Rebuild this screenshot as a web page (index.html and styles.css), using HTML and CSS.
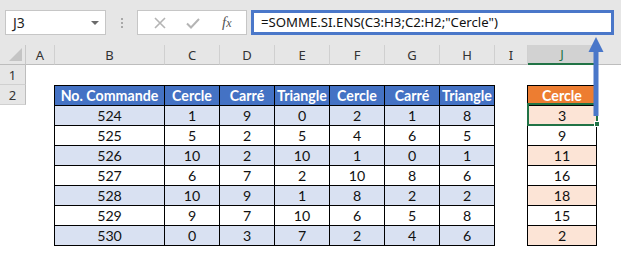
FILE: index.html
```html
<!DOCTYPE html>
<html>
<head>
<meta charset="utf-8">
<link rel="stylesheet" href="styles.css">
</head>
<body>
<div class="app">
  <div class="topbar">
    <div class="namebox"><span class="nb-text">J3</span><span class="nb-caret"></span></div>
    <div class="dots"><span></span><span></span><span></span></div>
    <div class="fbuttons">
      <svg class="ico" width="14" height="14" viewBox="0 0 14 14"><path d="M2 2 L12 12 M12 2 L2 12" stroke="#b4b4b4" stroke-width="1.6" fill="none"/></svg>
      <svg class="ico" width="16" height="14" viewBox="0 0 16 14"><path d="M2 7.5 L6 11.5 L14 3" stroke="#b4b4b4" stroke-width="2" fill="none"/></svg>
      <span class="fx">f<i>x</i></span>
    </div>
    <div class="formula">=SOMME.SI.ENS(C3:H3;C2:H2;"Cercle")</div>
  </div>
  <div class="sheet">
    <div class="corner"><span class="tri"></span></div>
    <div class="ch">A</div><div class="ch">B</div><div class="ch">C</div><div class="ch">D</div><div class="ch">E</div><div class="ch">F</div><div class="ch">G</div><div class="ch">H</div><div class="ch">I</div><div class="ch ch-sel">J</div><div class="ch ch-rest"></div>
    <div class="rh">1</div><div class="row-fill"></div>
    <div class="rh">2</div><div class="row-fill"></div>
    <div class="rh rh-sel">3</div><div class="row-fill"></div>
    <div class="rh">4</div><div class="row-fill"></div>
    <div class="rh">5</div><div class="row-fill"></div>
    <div class="rh">6</div><div class="row-fill"></div>
    <div class="rh">7</div><div class="row-fill"></div>
    <div class="rh">8</div><div class="row-fill"></div>
    <div class="rh">9</div><div class="row-fill"></div>
    <div class="rh">10</div><div class="row-fill"></div>

    <table class="data">
      <colgroup><col class="cb"><col class="cn"><col class="cn"><col class="cn"><col class="cn"><col class="cn"><col class="cn"></colgroup>
      <tr class="hd"><td>No. Commande</td><td>Cercle</td><td>Carré</td><td>Triangle</td><td>Cercle</td><td>Carré</td><td>Triangle</td></tr>
      <tr class="alt"><td>524</td><td>1</td><td>9</td><td>0</td><td>2</td><td>1</td><td>8</td></tr>
      <tr><td>525</td><td>5</td><td>2</td><td>5</td><td>4</td><td>6</td><td>5</td></tr>
      <tr class="alt"><td>526</td><td>10</td><td>2</td><td>10</td><td>1</td><td>0</td><td>1</td></tr>
      <tr><td>527</td><td>6</td><td>7</td><td>2</td><td>10</td><td>8</td><td>6</td></tr>
      <tr class="alt"><td>528</td><td>10</td><td>9</td><td>1</td><td>8</td><td>2</td><td>2</td></tr>
      <tr><td>529</td><td>9</td><td>7</td><td>10</td><td>6</td><td>5</td><td>8</td></tr>
      <tr class="alt"><td>530</td><td>0</td><td>3</td><td>7</td><td>2</td><td>4</td><td>6</td></tr>
    </table>

    <table class="res">
      <tr class="hd"><td>Cercle</td></tr>
      <tr class="alt"><td>3</td></tr>
      <tr><td>9</td></tr>
      <tr class="alt"><td>11</td></tr>
      <tr><td>16</td></tr>
      <tr class="alt"><td>18</td></tr>
      <tr><td>15</td></tr>
      <tr class="alt"><td>2</td></tr>
    </table>
  </div>
  <div class="selbox"></div>
  <div class="handle"></div>
  <svg class="arrow" width="20" height="90" viewBox="0 0 20 90">
    <rect x="7.5" y="14" width="5" height="66" fill="#4a77c9"/>
    <path d="M2.5 16 L10 1 L17.5 16 Z" fill="#4a77c9"/>
  </svg>
</div>
</body>
</html>
```
FILE: styles.css
```css
* { box-sizing: border-box; }
html, body { margin: 0; padding: 0; }
body { width: 621px; height: 257px; overflow: hidden; background: #fff; font-family: "Noto Sans", sans-serif; }
.app { position: relative; width: 621px; height: 257px; overflow: hidden; }

.topbar {
  height: 45px;
  background: #e6e6e6;
  display: flex;
  align-items: flex-start;
  padding-top: 10px;
  padding-left: 5px;
}
.namebox {
  width: 101px; height: 25px;
  background: #fff;
  border: 1px solid #c6c6c6;
  display: flex; align-items: center; justify-content: space-between;
  padding: 0 6px 0 7px;
}
.nb-text { font-size: 14px; color: #222; font-family: "Noto Sans", sans-serif; }
.nb-caret { width: 0; height: 0; border-left: 4px solid transparent; border-right: 4px solid transparent; border-top: 4px solid #6a6a6a; }
.dots { width: 31px; height: 25px; display: flex; flex-direction: column; align-items: center; justify-content: center; gap: 2px; }
.dots span { width: 2px; height: 2px; background: #a8a8a8; }
.fbuttons {
  width: 110px; height: 25px;
  background: #fff;
  border: 1px solid #c6c6c6;
  display: flex; align-items: center;
  padding-left: 15px;
  gap: 18px;
}
.fx { font-family: "Liberation Serif", serif; font-style: italic; font-size: 15px; color: #555; margin-left: 3px; }
.fx i { font-size: 12px; }
.formula {
  margin-left: 4px;
  width: 363px; height: 25px;
  background: #fff;
  border: 3px solid #4a77c9;
  font-family: "Noto Sans", sans-serif;
  font-size: 13.2px;
  color: #111;
  line-height: 19px;
  padding-left: 7px;
  white-space: nowrap;
}

.sheet {
  display: grid;
  grid-template-columns: 26px 29px 110px repeat(6, 55px) 33px 69px 1fr;
  grid-template-rows: repeat(11, 20px);
}
.corner { background: #e6e6e6; border-right: 1px solid #c8c8c8; border-bottom: 1px solid #bdbdbd; position: relative; }
.tri { position: absolute; right: 3px; bottom: 3px; width: 0; height: 0; border-left: 13px solid transparent; border-bottom: 13px solid #c4c4c4; }
.ch {
  background: #e6e6e6;
  border-right: 1px solid #d0d0d0;
  border-bottom: 1px solid #bdbdbd;
  font-family: "Noto Sans", sans-serif;
  font-size: 13px; color: #333;
  display: flex; align-items: center; justify-content: center;
}
.ch-sel { background: #d2d2d2; border-bottom: 2px solid #217346; color: #217346; }
.ch-rest { border-right: none; }
.rh {
  grid-column: 1;
  background: #e6e6e6;
  border-right: 1px solid #bdbdbd;
  border-bottom: 1px solid #d0d0d0;
  font-family: "Noto Sans", sans-serif;
  font-size: 13px; color: #333;
  display: flex; align-items: center; justify-content: center;
}
.rh-sel { background: #d2d2d2; border-right: 2px solid #217346; color: #217346; }
.row-fill { grid-column: 2 / 13; }

table { border-collapse: collapse; font-family: "Lato", sans-serif; font-size: 14.2px; color: #111; table-layout: fixed; }
td { border: 1px solid #000; height: 20px; padding: 0; text-align: center; line-height: 18px; white-space: nowrap; overflow: hidden; }
.data { grid-column: 3 / 10; grid-row: 3 / 11; width: 386px; margin-left: -1px; }
.cb { width: 110px; }
.cn { width: 55px; }
.data .hd td { background: #4472c4; color: #fff; font-weight: bold; }
.data .alt td { background: #d9e1f2; }
.res { grid-column: 11; grid-row: 3 / 11; width: 70px; margin-left: -1px; }
.res .hd td { background: #ed7d31; color: #fff; font-weight: bold; }
.res .alt td { background: #fce4d6; }

.selbox { position: absolute; left: 527px; top: 103px; width: 71px; height: 23px; border: 2px solid #217346; }
.handle { position: absolute; left: 594px; top: 121px; width: 6px; height: 6px; background: #217346; border: 1px solid #fff; }
.arrow { position: absolute; left: 586px; top: 36px; }
```
